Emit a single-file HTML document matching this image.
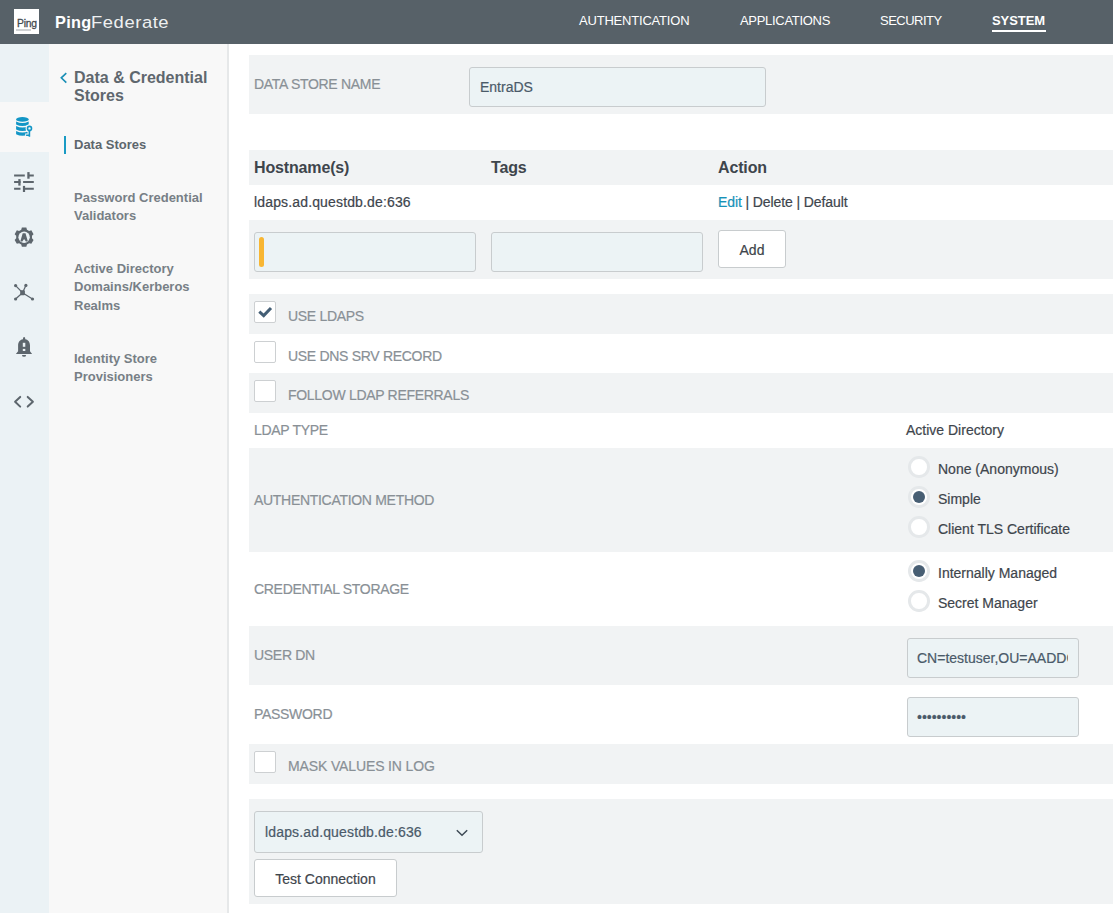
<!DOCTYPE html>
<html><head><meta charset="utf-8">
<style>
*{box-sizing:border-box;margin:0;padding:0}
html,body{width:1113px;height:913px;overflow:hidden;background:#fff;font-family:"Liberation Sans",sans-serif;color:#3e454c}
.lbl,.txt,.btn{-webkit-text-stroke:0.2px currentColor}
.abs{position:absolute}
#hdr{left:0;top:0;width:1113px;height:44px;background:#576168}
#logo{left:14px;top:9px;width:25px;height:25px;background:#fff}
#brand{left:55px;top:12px;font-size:16.3px;color:#fff;white-space:nowrap;line-height:20px}
.nav{top:13px;font-size:13px;color:#fff;line-height:16px;white-space:nowrap;letter-spacing:-0.2px}
#rail{left:0;top:44px;width:49px;height:869px;background:#ebf2f5}
#railact{left:0;top:102px;width:49px;height:50px;background:#f8f8f8}
#sub{left:49px;top:44px;width:178px;height:869px;background:#f8f8f8}
#subb{left:227px;top:44px;width:2px;height:869px;background:#e6e8e9}
.row{left:249px;width:864px;background:#f1f3f4}
.lbl{font-size:14px;color:#899096;white-space:nowrap;letter-spacing:-0.3px;line-height:16px}
.inp{background:#ecf3f5;border:1px solid #c8ccce;border-radius:3px}
.txt{font-size:14px;color:#3e454c;white-space:nowrap;line-height:16px}
.th{font-size:16px;font-weight:bold;color:#3e454c;white-space:nowrap;letter-spacing:-0.15px;line-height:18px;margin-top:1px}
.cb{width:21.5px;height:21.5px;background:#fff;border:1px solid #cdd0d2;border-radius:2px}
.radio{width:21.5px;height:21.5px;border-radius:50%;background:#fff;border:3px solid #e5e8ea}
.radio.on::after{content:"";position:absolute;left:1.75px;top:1.75px;width:12px;height:12px;border-radius:50%;background:#475e73}
.subitem{left:74px;font-size:13px;font-weight:bold;color:#777f86;line-height:18.3px}
.btn{background:#fff;border:1px solid #c8ccce;border-radius:3px;font-size:14px;color:#3e454c;text-align:center}
</style></head><body>
<div id="hdr" class="abs"></div>
<div id="logo" class="abs"><div class="abs" style="left:2.5px;top:8px;font-size:11.5px;color:#42484e;letter-spacing:-0.3px;line-height:13px;transform:scaleX(0.9);transform-origin:left;-webkit-text-stroke:0.3px #42484e">Ping</div><div class="abs" style="left:2px;top:19.8px;width:15px;height:2px;background:#d0d2d4"></div></div>
<div id="brand" class="abs"><b style="letter-spacing:0.3px">Ping</b><span style="display:inline-block;letter-spacing:0.5px;color:#eef0f1;transform:scaleX(1.13);transform-origin:left">Federate</span></div>
<div class="abs nav" style="left:579px">AUTHENTICATION</div>
<div class="abs nav" style="left:740px;letter-spacing:-0.3px">APPLICATIONS</div>
<div class="abs nav" style="left:880px;letter-spacing:-0.5px">SECURITY</div>
<div class="abs nav" style="left:992px;font-weight:bold;letter-spacing:-0.05px">SYSTEM</div>
<div class="abs" style="left:992px;top:30px;width:54px;height:2px;background:#fff"></div>

<div id="rail" class="abs"></div>
<div id="railact" class="abs"></div>
<div id="sub" class="abs"></div>
<div id="subb" class="abs"></div>


<svg class="abs" style="left:0;top:100px" width="49" height="320" viewBox="0 100 49 320">
 <!-- db key -->
 <g fill="#1396c6">
  <ellipse cx="22.4" cy="119.4" rx="6.3" ry="2.3"/>
  <path d="M16.1 121.4 Q22.4 124.6 28.7 121.4 V124.4 Q22.4 127.6 16.1 124.4Z"/>
  <path d="M16.1 125.9 Q22.4 129.1 28.7 125.9 V129.4 Q22.4 132.6 16.1 129.4Z"/>
  <path d="M16.1 130.9 Q22.4 134.1 28.7 130.9 V134.2 Q22.4 137.2 16.1 134.2Z"/>
 </g>
 <circle cx="29.5" cy="128.4" r="3.9" fill="#f8f8f8"/>
 <path d="M29.4 130 V137.5 M25.2 135.3 H29.5" stroke="#f8f8f8" stroke-width="3.6" fill="none"/>
 <circle cx="29.5" cy="128.4" r="2" fill="none" stroke="#1396c6" stroke-width="1.6"/>
 <path d="M29.4 130.2 V136.7 M26.1 135.3 H29.6" stroke="#1396c6" stroke-width="1.6" fill="none"/>
 <!-- sliders -->
 <g stroke="#5d666d" stroke-width="2" fill="none">
  <path d="M14.1 175.5 H24.8 M28 175.5 H33.8"/>
  <path d="M14.1 182.1 H20.5 M23.1 182.1 H33.8"/>
  <path d="M14.1 188.8 H20.5 M23.6 188.8 H33.8"/>
 </g>
 <g fill="#5d666d">
  <rect x="27.3" y="172.1" width="2.3" height="6.6"/>
  <rect x="18.3" y="179.1" width="2.3" height="6.5"/>
  <rect x="22.9" y="185.9" width="2.2" height="6.1"/>
 </g>
 <!-- gear A -->
 <path fill="#5d666d" d="M21.23 229.63 L21.87 227.45 L26.33 227.45 L26.97 229.63 L29.13 230.88 L31.34 230.35 L33.57 234.21 L32.00 235.85 L32.00 238.35 L33.57 239.99 L31.34 243.85 L29.13 243.32 L26.97 244.57 L26.33 246.75 L21.87 246.75 L21.23 244.57 L19.07 243.32 L16.86 243.85 L14.63 239.99 L16.20 238.35 L16.20 235.85 L14.63 234.21 L16.86 230.35 L19.07 230.88Z"/>
 <circle cx="24.1" cy="237.3" r="5.7" fill="#ebf2f5"/>
 <path fill="#5d666d" d="M22.7 233.2 H25.5 L27.9 241.4 H25.9 L24.1 238.9 L22.3 241.4 H20.3Z"/>
 <!-- network -->
 <path fill="none" stroke="#5d666d" stroke-width="1.3" d="M15.6 285.6 L22.5 292.7 L25.9 285.4 M15.6 299 L22.5 292.7 L32.5 299"/>
 <g fill="#5d666d">
  <circle cx="15.6" cy="285.6" r="1.6"/><circle cx="25.9" cy="285.4" r="1.6"/>
  <circle cx="15.6" cy="299" r="1.6"/><circle cx="32.5" cy="299" r="1.6"/>
  <rect x="20.2" y="290.3" width="4.7" height="4.9" rx="0.8"/>
 </g>
 <!-- bell -->
 <path fill="#5d666d" d="M18.1 351.2 V345.5 C18.1 341.8 20.4 339.7 22.9 339.3 L23.2 337.5 Q24.1 336.7 25 337.5 L25.3 339.3 C27.8 339.7 30 341.8 30 345.5 V351.2 L32.1 353.9 H15.9 Z"/>
 <path fill="#5d666d" d="M22 354.9 H26.1 A2.05 1.9 0 0 1 22 354.9Z"/>
 <rect x="22.8" y="342.8" width="2.5" height="4" fill="#ebf2f5"/>
 <rect x="22.8" y="348.9" width="2.5" height="2.1" fill="#ebf2f5"/>
 <!-- code -->
 <path d="M20.2 396.9 L15.1 401.7 L20.2 406.6 M27.7 396.9 L32.9 401.7 L27.7 406.6" stroke="#5d666d" stroke-width="2" stroke-linecap="round" stroke-linejoin="round" fill="none"/>
</svg>
<svg class="abs" style="left:60px;top:72px" width="9" height="12"><path d="M6.3 1.2 L1.3 5.8 L6.3 10.6" stroke="#1a8fb6" stroke-width="1.6" fill="none"/></svg>
<div class="abs" style="left:74px;top:69px;font-size:16px;font-weight:bold;color:#5f676e;line-height:18px">Data &amp; Credential<br>Stores</div>
<div class="abs" style="left:64px;top:136px;width:2px;height:18px;background:#1a9bc4"></div>
<div class="abs subitem" style="top:136px;color:#5d666d">Data Stores</div>
<div class="abs subitem" style="top:189px">Password Credential<br>Validators</div>
<div class="abs subitem" style="top:260px">Active Directory<br>Domains/Kerberos<br>Realms</div>
<div class="abs subitem" style="top:350px">Identity Store<br>Provisioners</div>

<!-- main -->
<div class="abs row" style="top:55px;height:59px"></div>
<div class="abs lbl" style="left:254px;top:76px">DATA STORE NAME</div>
<div class="abs inp" style="left:469px;top:67px;width:297px;height:40px"></div>
<div class="abs txt" style="left:480px;top:79px;color:#4a5a69">EntraDS</div>

<div class="abs row" style="top:150px;height:35px"></div>
<div class="abs th" style="left:254px;top:158px">Hostname(s)</div>
<div class="abs th" style="left:491px;top:158px">Tags</div>
<div class="abs th" style="left:718px;top:158px">Action</div>
<div class="abs txt" style="left:254px;top:194px;letter-spacing:0.15px">ldaps.ad.questdb.de:636</div>
<div class="abs txt" style="left:718px;top:194px;letter-spacing:-0.1px"><span style="color:#1792b8">Edit</span> | Delete | Default</div>

<div class="abs row" style="top:220px;height:59px"></div>
<div class="abs inp" style="left:254px;top:232px;width:222px;height:40px"></div>
<div class="abs" style="left:259px;top:237px;width:5px;height:30px;background:#f8b633;border-radius:3px"></div>
<div class="abs inp" style="left:491px;top:232px;width:212px;height:40px"></div>
<div class="abs btn" style="left:718px;top:230px;width:68px;height:38px;line-height:38px">Add</div>

<div class="abs row" style="top:294px;height:40px"></div>
<div class="abs cb" style="left:254px;top:301px"></div>
<svg class="abs" style="left:254px;top:301px" width="22" height="22"><path d="M5.3 10.6 L9.7 14.6 L17 7" stroke="#435e75" stroke-width="3" fill="none"/></svg>
<div class="abs lbl" style="left:288px;top:308px">USE LDAPS</div>
<div class="abs cb" style="left:254px;top:341px"></div>
<div class="abs lbl" style="left:288px;top:348px">USE DNS SRV RECORD</div>
<div class="abs row" style="top:373px;height:40px"></div>
<div class="abs cb" style="left:254px;top:380px"></div>
<div class="abs lbl" style="left:288px;top:387px">FOLLOW LDAP REFERRALS</div>
<div class="abs lbl" style="left:254px;top:422px">LDAP TYPE</div>
<div class="abs txt" style="left:906px;top:422px">Active Directory</div>

<div class="abs row" style="top:448px;height:104px"></div>
<div class="abs lbl" style="left:254px;top:492px">AUTHENTICATION METHOD</div>
<div class="abs radio" style="left:908px;top:456.3px"></div>
<div class="abs txt" style="left:938px;top:461px">None (Anonymous)</div>
<div class="abs radio on" style="left:908px;top:486.3px"></div>
<div class="abs txt" style="left:938px;top:491px">Simple</div>
<div class="abs radio" style="left:908px;top:516.3px"></div>
<div class="abs txt" style="left:938px;top:521px">Client TLS Certificate</div>

<div class="abs lbl" style="left:254px;top:581px">CREDENTIAL STORAGE</div>
<div class="abs radio on" style="left:908px;top:560.3px"></div>
<div class="abs txt" style="left:938px;top:565px">Internally Managed</div>
<div class="abs radio" style="left:908px;top:590.3px"></div>
<div class="abs txt" style="left:938px;top:595px">Secret Manager</div>

<div class="abs row" style="top:626px;height:59px"></div>
<div class="abs lbl" style="left:254px;top:647px">USER DN</div>
<div class="abs inp" style="left:907px;top:638px;width:172px;height:40px;overflow:hidden"></div>
<div class="abs txt" style="left:917px;top:650px;color:#4a5a69;width:151px;overflow:hidden">CN=testuser,OU=AADDC Users</div>
<div class="abs lbl" style="left:254px;top:706px">PASSWORD</div>
<div class="abs inp" style="left:907px;top:697px;width:172px;height:40px"></div>
<div class="abs txt" style="left:917px;top:709px;color:#4a5a69">••••••••••</div>

<div class="abs row" style="top:744px;height:40px"></div>
<div class="abs cb" style="left:254px;top:751px"></div>
<div class="abs lbl" style="left:288px;top:758px;letter-spacing:-0.13px">MASK VALUES IN LOG</div>

<div class="abs row" style="top:799px;height:105px"></div>
<div class="abs inp" style="left:254px;top:811px;width:229px;height:42px"></div>
<div class="abs txt" style="left:265px;top:824px;color:#4a5a69;letter-spacing:0.15px">ldaps.ad.questdb.de:636</div>
<svg class="abs" style="left:455px;top:828px" width="14" height="10"><path d="M1.8 2.3 L7 7.3 L12.2 2.3" stroke="#3e4a55" stroke-width="1.5" fill="none"/></svg>
<div class="abs btn" style="left:254px;top:859px;width:143px;height:38px;line-height:38.5px">Test Connection</div>
</body></html>
